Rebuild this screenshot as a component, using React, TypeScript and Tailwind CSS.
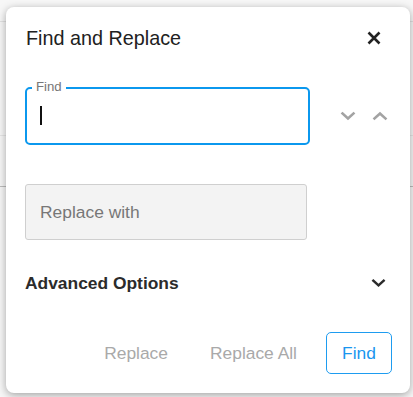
// Find and Replace dialog over a faint document page
function Chevron({ dir, className }: { dir: 'up' | 'down'; className?: string }) {
  return (
    <svg viewBox="0 0 16 10" className={className} fill="none" stroke="currentColor" strokeWidth={2.6} strokeLinecap="square">
      {dir === 'down' ? <path d="M2.5 2.5 L8 7.5 L13.5 2.5" /> : <path d="M2.5 7.5 L8 2.5 L13.5 7.5" />}
    </svg>
  );
}

export default function App() {
  return (
    <div className="relative h-[397px] w-[413px] overflow-hidden bg-[#f7f7f7] font-[family-name:Liberation_Sans,Arial,sans-serif]">
      {/* Page behind the dialog */}
      <div className="flex flex-col">
        <div className="h-[22px] border-b border-[#e2e2e2]" />
        <div className="h-[114px] border-b border-[#e6e6e6]" />
        <div className="h-[51px] border-b border-[#bdbdbd]" />
      </div>

      {/* Dialog */}
      <div className="absolute left-[6px] top-[7px] flex h-[386px] w-[404px] flex-col rounded-[8px] bg-white shadow-[0_2px_8px_rgba(0,0,0,0.35)]">
        <div className="mt-[19px] flex h-[24px] items-center justify-between pl-[20px] pr-[29px]">
          <h2 className="text-[19.8px] leading-[24px] text-[#212121]">Find and Replace</h2>
          <button className="text-[#222]">
            <svg viewBox="0 0 14 14" className="h-[14px] w-[14px]" fill="none" stroke="currentColor" strokeWidth={2.6}>
              <path d="M1.5 1.5 L12.5 12.5 M12.5 1.5 L1.5 12.5" />
            </svg>
          </button>
        </div>

        <div className="mt-[37px] flex items-center pl-[19px]">
          <div className="relative h-[58px] w-[285px] rounded-[5px] border-2 border-[#0b98ee]">
            <span className="absolute left-[5px] top-[-10px] bg-white px-[4px] text-[13.2px] leading-[16px] text-[#777]">Find</span>
            <div className="absolute left-[13px] top-[17px] h-[19px] w-[2px] bg-[#111]" />
          </div>
          <div className="ml-[30px] flex items-center gap-[16px] text-[#a3a3a3]">
            <Chevron dir="down" className="h-[10px] w-[16px]" />
            <Chevron dir="up" className="h-[10px] w-[16px]" />
          </div>
        </div>

        <div className="ml-[19px] mt-[39px] flex h-[56px] w-[282px] items-center rounded-[3px] border border-[#cfcfcf] bg-[#f3f3f3] px-[14px]">
          <span className="text-[17.4px] text-[#777]">Replace with</span>
        </div>

        <div className="mt-[31px] flex h-[24px] items-center justify-between pl-[19px] pr-[24px]">
          <span className="text-[17.4px] font-bold text-[#2b2b2b]">Advanced Options</span>
          <Chevron dir="down" className="h-[10px] w-[15px] text-[#2b2b2b]" />
        </div>

        <div className="mt-[37px] flex items-center justify-end pr-[18px]">
          <button className="text-[17.4px] text-[#a9a9a9]">Replace</button>
          <button className="ml-[42px] text-[17.4px] text-[#a9a9a9]">Replace All</button>
          <button className="ml-[29px] h-[42px] w-[66px] rounded-[5px] border border-[#1e9cf0] text-[17.4px] text-[#1a96ef]">Find</button>
        </div>
      </div>
    </div>
  );
}
